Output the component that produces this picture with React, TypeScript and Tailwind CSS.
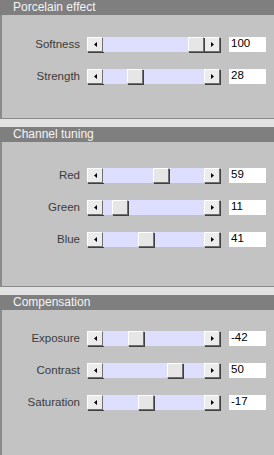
import React from 'react';

type Slider = { label: string; value: number };
type Section = { title: string; min: number; max: number; pt: string; rows: Slider[] };

const sections: Section[] = [
  {
    title: 'Porcelain effect',
    min: 0,
    max: 100,
    pt: 'pt-[22px] h-[103px]',
    rows: [
      { label: 'Softness', value: 100 },
      { label: 'Strength', value: 28 },
    ],
  },
  {
    title: 'Channel tuning',
    min: 0,
    max: 100,
    pt: 'pt-[26px] h-[144px]',
    rows: [
      { label: 'Red', value: 59 },
      { label: 'Green', value: 11 },
      { label: 'Blue', value: 41 },
    ],
  },
  {
    title: 'Compensation',
    min: -100,
    max: 100,
    pt: 'pt-[21px] flex-1',
    rows: [
      { label: 'Exposure', value: -42 },
      { label: 'Contrast', value: 50 },
      { label: 'Saturation', value: -17 },
    ],
  },
];

const bevel = 'border border-t-white border-l-white border-r-[#707070] border-b-[#707070] shadow-[1px_1px_0_#404040]';

const ArrowButton: React.FC<{ dir: 'left' | 'right' }> = ({ dir }) => (
  <div className={`w-[16px] h-[15px] bg-[#ececec] flex items-center justify-center shrink-0 ${bevel}`}>
    <svg width="3" height="5" viewBox="0 0 3 5">
      {dir === 'left' ? <polygon points="3,0 3,5 0,2.5" fill="#000" /> : <polygon points="0,0 0,5 3,2.5" fill="#000" />}
    </svg>
  </div>
);

const SliderRow: React.FC<Slider & { min: number; max: number }> = ({ label, value, min, max }) => {
  // thumb travels 85px inside the 101px track
  const left = Math.round(((value - min) / (max - min)) * 85);
  return (
    <div className="flex items-center h-[15px]">
      <div className="w-[80px] text-right text-[11.5px] leading-none text-[#3c3c3c]">{label}</div>
      <div className="ml-[7px] flex">
        <ArrowButton dir="left" />
        <div className="relative w-[101px] h-[15px] bg-[#dedeff]">
          <div className={`absolute top-0 w-[16px] h-[15px] bg-[#e6e6e6] ${bevel}`} style={{ left }} />
        </div>
        <ArrowButton dir="right" />
      </div>
      <div className="ml-[9px] w-[37px] h-[15px] bg-white text-[11.5px] leading-[13px] text-black pl-[2px]">{value}</div>
    </div>
  );
};

export default function App() {
  return (
    <div
      className="w-[274px] h-[455px] bg-[#e2e2e2] flex flex-col gap-[8px] overflow-hidden"
      style={{ fontFamily: '"Liberation Sans", Arial, sans-serif' }}
    >
      {sections.map((s, i) => (
        <div
          key={s.title}
          className={`flex flex-col bg-[#c3c3c3] border-l-2 border-[#8a8a8a] ${i < 2 ? 'border-b' : 'flex-1'}`}
        >
          <div className="h-[15px] bg-[#7f7f7f] text-[#f4f4f4] text-[12px] leading-[15px] -ml-[2px] pl-[13px]">
            {s.title}
          </div>
          <div className={`flex flex-col gap-[17px] -ml-[2px] ${s.pt}`}>
            {s.rows.map((r) => (
              <SliderRow key={r.label} {...r} min={s.min} max={s.max} />
            ))}
          </div>
        </div>
      ))}
    </div>
  );
}
